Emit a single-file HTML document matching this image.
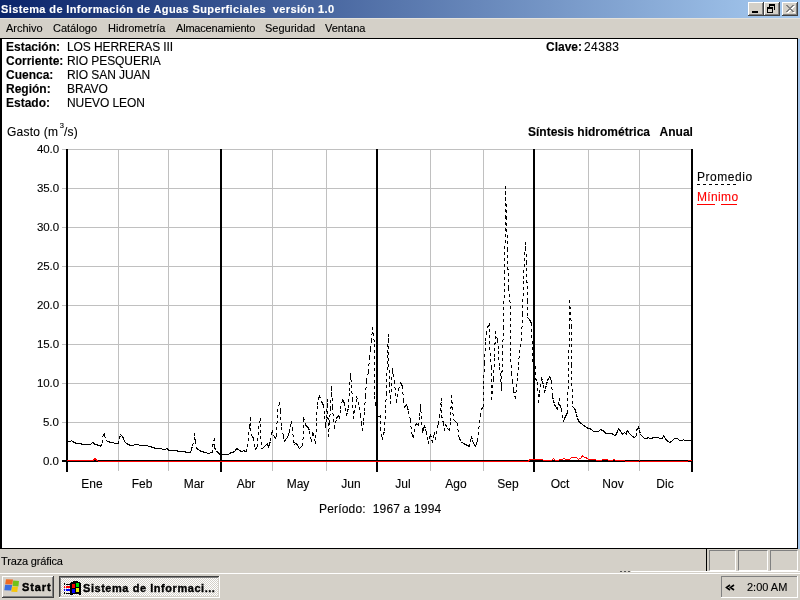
<!DOCTYPE html>
<html><head><meta charset="utf-8">
<style>
*{margin:0;padding:0;box-sizing:border-box}
html,body{width:800px;height:600px;overflow:hidden;background:#D4D0C8;font-family:"Liberation Sans",sans-serif;font-size:11px;color:#000}
.a{position:absolute;white-space:nowrap;line-height:11px;will-change:transform;-webkit-text-stroke:0.12px currentColor}
.b{font-weight:bold}
.c{font-size:12px;line-height:12px}
#title{position:absolute;left:0;top:0;width:800px;height:18px;background:linear-gradient(to right,#0A246A,#A6CAF0)}
.tb{position:absolute;top:2px;width:16px;height:14px;background:#D4D0C8;border-top:1px solid #fff;border-left:1px solid #fff;border-right:1px solid #404040;border-bottom:1px solid #404040;box-shadow:inset -1px -1px 0 #808080}
#menu{position:absolute;left:0;top:18px;width:800px;height:20px;background:#D4D0C8;border-top:1px solid #E4E2DC}
#client{position:absolute;left:0;top:38px;width:798px;height:511px;background:#fff;border:1px solid #000;border-left:2px solid #000}
#rstrip{position:absolute;left:798px;top:39px;width:2px;height:510px;background:#A4C4E8}
#status{position:absolute;left:0;top:549px;width:800px;height:24px;background:#D4D0C8}
.pn{position:absolute;top:550px;height:21px;border-top:1px solid #808080;border-left:1px solid #808080;border-right:1px solid #fff;border-bottom:1px solid #fff}
#task{position:absolute;left:0;top:573px;width:800px;height:27px;background:#D4D0C8;border-top:1px solid #fff}
</style></head><body>
<div id="title"></div>
<div class="a b" style="left:1px;top:4px;color:#fff;letter-spacing:0.38px">Sistema de Información de Aguas Superficiales&nbsp; versión 1.0</div>
<svg style="position:absolute;left:0;top:0" width="800" height="18" shape-rendering="crispEdges">
<g id="btns"></g>
<rect x="748" y="2" width="16" height="14" fill="#404040"/><rect x="748" y="2" width="15" height="13" fill="#FFFFFF"/><rect x="749" y="3" width="14" height="12" fill="#808080"/><rect x="749" y="3" width="13" height="11" fill="#D4D0C8"/><rect x="764" y="2" width="16" height="14" fill="#404040"/><rect x="764" y="2" width="15" height="13" fill="#FFFFFF"/><rect x="765" y="3" width="14" height="12" fill="#808080"/><rect x="765" y="3" width="13" height="11" fill="#D4D0C8"/><rect x="782" y="2" width="16" height="14" fill="#404040"/><rect x="782" y="2" width="15" height="13" fill="#FFFFFF"/><rect x="783" y="3" width="14" height="12" fill="#808080"/><rect x="783" y="3" width="13" height="11" fill="#D4D0C8"/><rect x="752" y="11" width="6" height="2" fill="#000"/><path d="M769 4h6v6h-1v-4h-5z M767 7h6v6h-6z" fill="#000"/><rect x="768" y="9" width="4" height="3" fill="#D4D0C8"/><rect x="769" y="6" width="1" height="1" fill="#000"/><rect x="771" y="6" width="0" height="0"/><rect x="787" y="6" width="2" height="1" fill="#FFFFFF"/><rect x="793" y="6" width="2" height="1" fill="#FFFFFF"/><rect x="788" y="7" width="2" height="1" fill="#FFFFFF"/><rect x="792" y="7" width="2" height="1" fill="#FFFFFF"/><rect x="789" y="8" width="2" height="1" fill="#FFFFFF"/><rect x="791" y="8" width="2" height="1" fill="#FFFFFF"/><rect x="790" y="9" width="2" height="1" fill="#FFFFFF"/><rect x="790" y="9" width="2" height="1" fill="#FFFFFF"/><rect x="791" y="10" width="2" height="1" fill="#FFFFFF"/><rect x="789" y="10" width="2" height="1" fill="#FFFFFF"/><rect x="792" y="11" width="2" height="1" fill="#FFFFFF"/><rect x="788" y="11" width="2" height="1" fill="#FFFFFF"/><rect x="793" y="12" width="2" height="1" fill="#FFFFFF"/><rect x="787" y="12" width="2" height="1" fill="#FFFFFF"/><rect x="786" y="5" width="2" height="1" fill="#808080"/><rect x="792" y="5" width="2" height="1" fill="#808080"/><rect x="787" y="6" width="2" height="1" fill="#808080"/><rect x="791" y="6" width="2" height="1" fill="#808080"/><rect x="788" y="7" width="2" height="1" fill="#808080"/><rect x="790" y="7" width="2" height="1" fill="#808080"/><rect x="789" y="8" width="2" height="1" fill="#808080"/><rect x="789" y="8" width="2" height="1" fill="#808080"/><rect x="790" y="9" width="2" height="1" fill="#808080"/><rect x="788" y="9" width="2" height="1" fill="#808080"/><rect x="791" y="10" width="2" height="1" fill="#808080"/><rect x="787" y="10" width="2" height="1" fill="#808080"/><rect x="792" y="11" width="2" height="1" fill="#808080"/><rect x="786" y="11" width="2" height="1" fill="#808080"/>
</svg>
<div id="menu"></div>
<div class="a" style="left:6px;top:23px">Archivo</div>
<div class="a" style="left:53px;top:23px">Catálogo</div>
<div class="a" style="left:108px;top:23px">Hidrometría</div>
<div class="a" style="left:176px;top:23px;letter-spacing:-0.2px">Almacenamiento</div>
<div class="a" style="left:265px;top:23px">Seguridad</div>
<div class="a" style="left:325px;top:23px">Ventana</div>
<div id="client"></div>
<div id="rstrip"></div>

<div class="a c b" style="left:6px;top:41px">Estación:</div>
<div class="a c b" style="left:6px;top:55px">Corriente:</div>
<div class="a c b" style="left:6px;top:69px">Cuenca:</div>
<div class="a c b" style="left:6px;top:83px">Región:</div>
<div class="a c b" style="left:6px;top:97px">Estado:</div>
<div class="a c" style="left:67px;top:41px;letter-spacing:-0.08px">LOS HERRERAS III</div>
<div class="a c" style="left:67px;top:55px;letter-spacing:-0.08px">RIO PESQUERIA</div>
<div class="a c" style="left:67px;top:69px;letter-spacing:-0.08px">RIO SAN JUAN</div>
<div class="a c" style="left:67px;top:83px;letter-spacing:-0.08px">BRAVO</div>
<div class="a c" style="left:67px;top:97px;letter-spacing:-0.08px">NUEVO LEON</div>
<div class="a c b" style="left:546px;top:41px">Clave:</div>
<div class="a c" style="left:584px;top:41px;letter-spacing:0.4px">24383</div>

<div class="a c" style="left:7px;top:126px;letter-spacing:0.25px">Gasto (m<span style="font-size:7.5px;position:relative;top:-8px;margin:0 0 0 1.5px;line-height:0;letter-spacing:0">3</span>/s)</div>
<div class="a c b" style="left:528px;top:126px">Síntesis hidrométrica&nbsp;&nbsp; Anual</div>

<svg style="position:absolute;left:0;top:0" width="800" height="600" shape-rendering="crispEdges">
<path d="M62 149.5H691 M62 188.5H691 M62 227.5H691 M62 266.5H691 M62 305.5H691 M62 344.5H691 M62 383.5H691 M62 422.5H691 M118.5 149V471 M168.5 149V471 M272.5 149V471 M326.5 149V471 M430.5 149V471 M483.5 149V471 M588.5 149V471 M639.5 149V471" stroke="#C0C0C0" stroke-width="1" fill="none"/>
<path d="M67 149V472 M221 149V472 M377 149V472 M534 149V472 M692 149V472" stroke="#000" stroke-width="2" fill="none"/>
<path d="M62 461H693" stroke="#000" stroke-width="2"/>
<path d="M67.5 442.5L68.5 441.5M68.5 441.5L70.5 441.5M70.5 441.5L71.5 440.5M71.5 440.5L72.5 441.5M72.5 441.5L74.5 442.5M74.5 442.5L76.5 443.5M76.5 443.5L77.5 443.5M77.5 443.5L79.5 443.5M79.5 443.5L80.5 443.5M80.5 443.5L82.5 444.5M82.5 444.5L84.5 444.5M84.5 444.5L85.5 444.5M85.5 444.5L87.5 444.5M87.5 444.5L88.5 444.5M88.5 444.5L90.5 444.5M90.5 444.5L91.5 443.5M91.5 443.5L92.5 442.5M92.5 442.5L94.5 443.5M94.5 443.5L94.5 444.5M94.5 444.5L96.5 444.5M96.5 444.5L98.5 445.5M98.5 445.5L99.5 445.5M99.5 445.5L100.5 446.5M100.5 446.5L102.5 442.5M102.5 442.5L102.5 436.5M102.5 436.5L104.5 433.5M104.5 433.5L104.5 435.5M104.5 435.5L106.5 440.5M106.5 440.5L107.5 441.5M107.5 441.5L108.5 441.5M108.5 441.5L110.5 442.5M110.5 442.5L112.5 442.5M112.5 442.5L113.5 442.5M113.5 442.5L114.5 443.5M114.5 443.5L116.5 443.5M116.5 443.5L118.5 443.5M118.5 443.5L119.5 438.5M119.5 438.5L120.5 434.5M120.5 434.5L122.5 436.5M122.5 436.5L123.5 438.5M123.5 438.5L124.5 441.5M124.5 441.5L126.5 443.5M126.5 443.5L128.5 444.5M128.5 444.5L130.5 445.5M130.5 445.5L131.5 445.5M131.5 445.5L133.5 445.5M133.5 445.5L134.5 444.5M134.5 444.5L136.5 444.5M136.5 444.5L138.5 444.5M138.5 444.5L139.5 445.5M139.5 445.5L140.5 445.5M140.5 445.5L142.5 445.5M142.5 445.5L144.5 445.5M144.5 445.5L145.5 445.5M145.5 445.5L147.5 445.5M147.5 445.5L148.5 446.5M148.5 446.5L150.5 446.5M150.5 446.5L152.5 447.5M152.5 447.5L153.5 447.5M153.5 447.5L155.5 448.5M155.5 448.5L156.5 448.5M156.5 448.5L158.5 448.5M158.5 448.5L160.5 448.5M160.5 448.5L161.5 448.5M161.5 448.5L162.5 449.5M162.5 449.5L164.5 449.5M164.5 449.5L165.5 449.5M165.5 449.5L166.5 448.5M166.5 448.5L168.5 449.5M168.5 449.5L168.5 450.5M168.5 450.5L170.5 450.5M170.5 450.5L172.5 450.5M172.5 450.5L173.5 450.5M173.5 450.5L175.5 450.5M175.5 450.5L176.5 450.5M176.5 450.5L178.5 451.5M178.5 451.5L180.5 451.5M180.5 451.5L181.5 451.5M181.5 451.5L183.5 451.5M183.5 451.5L184.5 451.5M184.5 451.5L186.5 452.5M186.5 452.5L187.5 452.5M187.5 452.5L188.5 452.5M188.5 452.5L190.5 452.5M190.5 452.5L191.5 449.5M191.5 449.5L192.5 445.5M192.5 445.5L194.5 439.5M194.5 439.5L194.5 433.5M194.5 433.5L195.5 441.5M195.5 441.5L196.5 448.5M196.5 448.5L198.5 449.5M198.5 449.5L199.5 450.5M199.5 450.5L201.5 451.5M201.5 451.5L202.5 451.5M202.5 451.5L204.5 452.5M204.5 452.5L206.5 452.5M206.5 452.5L207.5 453.5M207.5 453.5L209.5 453.5M209.5 453.5L210.5 452.5M210.5 452.5L212.5 452.5M212.5 452.5L212.5 446.5M212.5 446.5L214.5 438.5M214.5 438.5L214.5 447.5M214.5 447.5L216.5 451.5M216.5 451.5L218.5 452.5M218.5 452.5L219.5 454.5M219.5 454.5L221.5 454.5M221.5 454.5L222.5 454.5M222.5 454.5L224.5 454.5M224.5 454.5L225.5 454.5M225.5 454.5L227.5 454.5M227.5 454.5L228.5 454.5M228.5 454.5L229.5 453.5M229.5 453.5L231.5 452.5M231.5 452.5L232.5 452.5M232.5 452.5L234.5 451.5M234.5 451.5L235.5 450.5M235.5 450.5L236.5 448.5M236.5 448.5L238.5 449.5M238.5 449.5L239.5 450.5M239.5 450.5L241.5 451.5M241.5 451.5L242.5 451.5M242.5 451.5L243.5 450.5M243.5 450.5L245.5 451.5M245.5 451.5L246.5 451.5M246.5 451.5L247.5 446.5M247.5 446.5L249.5 426.5M249.5 426.5L250.5 417.5M250.5 417.5L250.5 428.5M250.5 428.5L251.5 435.5M251.5 435.5L252.5 436.5M252.5 436.5L253.5 438.5M253.5 438.5L255.5 449.5M255.5 449.5L256.5 447.5M256.5 447.5L257.5 446.5M257.5 446.5L258.5 428.5M258.5 428.5L260.5 418.5M260.5 418.5L260.5 430.5M260.5 430.5L261.5 448.5M261.5 448.5L262.5 448.5M262.5 448.5L263.5 447.5M263.5 447.5L265.5 445.5M265.5 445.5L267.5 443.5M267.5 443.5L268.5 447.5M268.5 447.5L269.5 444.5M269.5 444.5L270.5 440.5M270.5 440.5L271.5 433.5M271.5 433.5L272.5 430.5M272.5 430.5L273.5 435.5M273.5 435.5L275.5 438.5M275.5 438.5L276.5 435.5M276.5 435.5L277.5 411.5M277.5 411.5L279.5 402.5M279.5 402.5L280.5 411.5M280.5 411.5L281.5 427.5M281.5 427.5L283.5 436.5M283.5 436.5L284.5 441.5M284.5 441.5L285.5 439.5M285.5 439.5L287.5 437.5M287.5 437.5L288.5 434.5M288.5 434.5L289.5 431.5M289.5 431.5L290.5 426.5M290.5 426.5L291.5 421.5M291.5 421.5L292.5 428.5M292.5 428.5L293.5 440.5M293.5 440.5L294.5 444.5M294.5 444.5L295.5 443.5M295.5 443.5L296.5 443.5M296.5 443.5L297.5 445.5M297.5 445.5L299.5 448.5M299.5 448.5L300.5 447.5M300.5 447.5L302.5 445.5M302.5 445.5L303.5 433.5M303.5 433.5L303.5 417.5M303.5 417.5L305.5 424.5M305.5 424.5L306.5 426.5M306.5 426.5L308.5 427.5M308.5 427.5L309.5 431.5M309.5 431.5L311.5 441.5M311.5 441.5L312.5 432.5M312.5 432.5L313.5 433.5M313.5 433.5L315.5 443.5M315.5 443.5L316.5 420.5M316.5 420.5L317.5 404.5M317.5 404.5L318.5 399.5M318.5 399.5L319.5 395.5M319.5 395.5L321.5 401.5M321.5 401.5L322.5 403.5M322.5 403.5L323.5 405.5M323.5 405.5L324.5 416.5M324.5 416.5L325.5 427.5M325.5 427.5L326.5 417.5M326.5 417.5L327.5 399.5M327.5 399.5L328.5 436.5M328.5 436.5L329.5 422.5M329.5 422.5L330.5 408.5M330.5 408.5L331.5 386.5M331.5 386.5L332.5 407.5M332.5 407.5L333.5 419.5M333.5 419.5L334.5 428.5M334.5 428.5L336.5 418.5M336.5 418.5L337.5 416.5M337.5 416.5L338.5 415.5M338.5 415.5L339.5 418.5M339.5 418.5L340.5 408.5M340.5 408.5L342.5 399.5M342.5 399.5L343.5 401.5M343.5 401.5L344.5 403.5M344.5 403.5L345.5 408.5M345.5 408.5L346.5 415.5M346.5 415.5L347.5 411.5M347.5 411.5L348.5 407.5M348.5 407.5L349.5 390.5M349.5 390.5L350.5 373.5M350.5 373.5L352.5 399.5M352.5 399.5L353.5 418.5M353.5 418.5L354.5 412.5M354.5 412.5L355.5 407.5M355.5 407.5L356.5 396.5M356.5 396.5L358.5 402.5M358.5 402.5L359.5 407.5M359.5 407.5L360.5 415.5M360.5 415.5L361.5 423.5M361.5 423.5L362.5 430.5M362.5 430.5L363.5 420.5M363.5 420.5L364.5 410.5M364.5 410.5L365.5 395.5M365.5 395.5L366.5 380.5M366.5 380.5L368.5 371.5M368.5 371.5L369.5 357.5M369.5 357.5L370.5 348.5M370.5 348.5L371.5 340.5M371.5 340.5L372.5 327.5M372.5 327.5L374.5 344.5M374.5 344.5L374.5 396.5M374.5 396.5L375.5 403.5M375.5 403.5L376.5 410.5M376.5 410.5L378.5 416.5M378.5 416.5L379.5 416.5M379.5 416.5L380.5 415.5M380.5 415.5L380.5 428.5M380.5 428.5L381.5 434.5M381.5 434.5L382.5 439.5M382.5 439.5L383.5 434.5M383.5 434.5L384.5 430.5M384.5 430.5L385.5 407.5M385.5 407.5L386.5 393.5M386.5 393.5L387.5 352.5M387.5 352.5L388.5 334.5M388.5 334.5L388.5 352.5M388.5 352.5L389.5 384.5M389.5 384.5L390.5 403.5M390.5 403.5L391.5 385.5M391.5 385.5L392.5 368.5M392.5 368.5L394.5 381.5M394.5 381.5L395.5 393.5M395.5 393.5L396.5 402.5M396.5 402.5L397.5 396.5M397.5 396.5L398.5 389.5M398.5 389.5L400.5 382.5M400.5 382.5L401.5 384.5M401.5 384.5L402.5 386.5M402.5 386.5L403.5 400.5M403.5 400.5L404.5 407.5M404.5 407.5L405.5 405.5M405.5 405.5L406.5 404.5M406.5 404.5L407.5 407.5M407.5 407.5L408.5 411.5M408.5 411.5L410.5 420.5M410.5 420.5L411.5 432.5M411.5 432.5L412.5 435.5M412.5 435.5L413.5 437.5M413.5 437.5L414.5 431.5M414.5 431.5L415.5 425.5M415.5 425.5L416.5 423.5M416.5 423.5L418.5 425.5M418.5 425.5L419.5 415.5M419.5 415.5L420.5 404.5M420.5 404.5L422.5 432.5M422.5 432.5L423.5 429.5M423.5 429.5L424.5 425.5M424.5 425.5L425.5 429.5M425.5 429.5L426.5 432.5M426.5 432.5L427.5 437.5M427.5 437.5L428.5 443.5M428.5 443.5L429.5 438.5M429.5 438.5L430.5 434.5M430.5 434.5L432.5 442.5M432.5 442.5L433.5 437.5M433.5 437.5L434.5 432.5M434.5 432.5L435.5 439.5M435.5 439.5L437.5 426.5M437.5 426.5L438.5 423.5M438.5 423.5L439.5 416.5M439.5 416.5L441.5 398.5M441.5 398.5L441.5 415.5M441.5 415.5L443.5 423.5M443.5 423.5L444.5 430.5M444.5 430.5L445.5 424.5M445.5 424.5L447.5 428.5M447.5 428.5L448.5 429.5M448.5 429.5L449.5 430.5M449.5 430.5L450.5 420.5M450.5 420.5L451.5 395.5M451.5 395.5L453.5 419.5M453.5 419.5L454.5 420.5M454.5 420.5L455.5 421.5M455.5 421.5L456.5 422.5M456.5 422.5L457.5 423.5M457.5 423.5L458.5 435.5M458.5 435.5L459.5 438.5M459.5 438.5L461.5 442.5M461.5 442.5L462.5 442.5M462.5 442.5L463.5 443.5M463.5 443.5L465.5 444.5M465.5 444.5L467.5 445.5M467.5 445.5L469.5 446.5M469.5 446.5L470.5 441.5M470.5 441.5L471.5 436.5M471.5 436.5L472.5 440.5M472.5 440.5L473.5 443.5M473.5 443.5L474.5 444.5M474.5 444.5L475.5 446.5M475.5 446.5L476.5 443.5M476.5 443.5L477.5 440.5M477.5 440.5L479.5 422.5M479.5 422.5L480.5 415.5M480.5 415.5L481.5 409.5M481.5 409.5L482.5 407.5M482.5 407.5L483.5 406.5M483.5 406.5L483.5 383.5M483.5 383.5L484.5 362.5M484.5 362.5L485.5 340.5M485.5 340.5L486.5 333.5M486.5 333.5L487.5 327.5M487.5 327.5L489.5 323.5M489.5 323.5L489.5 347.5M489.5 347.5L491.5 367.5M491.5 367.5L491.5 399.5M491.5 399.5L493.5 378.5M493.5 378.5L494.5 356.5M494.5 356.5L495.5 331.5M495.5 331.5L497.5 340.5M497.5 340.5L498.5 351.5M498.5 351.5L499.5 367.5M499.5 367.5L501.5 390.5M501.5 390.5L502.5 353.5M502.5 353.5L503.5 327.5M503.5 327.5L504.5 272.5M504.5 272.5L505.5 217.5M505.5 217.5L505.5 186.5M505.5 186.5L506.5 217.5M506.5 217.5L507.5 249.5M507.5 249.5L508.5 288.5M508.5 288.5L510.5 306.5M510.5 306.5L510.5 353.5M510.5 353.5L511.5 373.5M511.5 373.5L512.5 381.5M512.5 381.5L513.5 390.5M513.5 390.5L515.5 398.5M515.5 398.5L516.5 386.5M516.5 386.5L517.5 375.5M517.5 375.5L518.5 364.5M518.5 364.5L519.5 352.5M519.5 352.5L521.5 340.5M521.5 340.5L522.5 313.5M522.5 313.5L523.5 278.5M523.5 278.5L525.5 242.5M525.5 242.5L526.5 262.5M526.5 262.5L527.5 301.5M527.5 301.5L527.5 317.5M527.5 317.5L529.5 319.5M529.5 319.5L530.5 321.5M530.5 321.5L531.5 323.5M531.5 323.5L532.5 353.5M532.5 353.5L533.5 375.5M533.5 375.5L535.5 366.5M535.5 366.5L535.5 378.5M535.5 378.5L537.5 382.5M537.5 382.5L538.5 402.5M538.5 402.5L539.5 392.5M539.5 392.5L541.5 377.5M541.5 377.5L542.5 381.5M542.5 381.5L543.5 385.5M543.5 385.5L544.5 392.5M544.5 392.5L545.5 388.5M545.5 388.5L546.5 384.5M546.5 384.5L547.5 380.5M547.5 380.5L549.5 376.5M549.5 376.5L550.5 378.5M550.5 378.5L551.5 381.5M551.5 381.5L552.5 396.5M552.5 396.5L553.5 400.5M553.5 400.5L554.5 404.5M554.5 404.5L555.5 406.5M555.5 406.5L557.5 409.5M557.5 409.5L558.5 404.5M558.5 404.5L559.5 398.5M559.5 398.5L559.5 404.5M559.5 404.5L560.5 406.5M560.5 406.5L561.5 409.5M561.5 409.5L562.5 415.5M562.5 415.5L563.5 421.5M563.5 421.5L564.5 418.5M564.5 418.5L565.5 416.5M565.5 416.5L566.5 414.5M566.5 414.5L567.5 412.5M567.5 412.5L569.5 326.5M569.5 326.5L569.5 300.5M569.5 300.5L571.5 326.5M571.5 326.5L571.5 365.5M571.5 365.5L572.5 406.5M572.5 406.5L574.5 408.5M574.5 408.5L575.5 410.5M575.5 410.5L576.5 414.5M576.5 414.5L577.5 418.5M577.5 418.5L578.5 420.5M578.5 420.5L579.5 422.5M579.5 422.5L581.5 423.5M581.5 423.5L582.5 424.5M582.5 424.5L583.5 425.5M583.5 425.5L585.5 426.5M585.5 426.5L586.5 427.5M586.5 427.5L588.5 428.5M588.5 428.5L589.5 428.5M589.5 428.5L591.5 429.5M591.5 429.5L592.5 430.5M592.5 430.5L593.5 431.5M593.5 431.5L595.5 431.5M595.5 431.5L596.5 431.5M596.5 431.5L597.5 431.5M597.5 431.5L598.5 431.5M598.5 431.5L599.5 430.5M599.5 430.5L600.5 429.5M600.5 429.5L602.5 430.5M602.5 430.5L603.5 430.5M603.5 430.5L604.5 432.5M604.5 432.5L606.5 433.5M606.5 433.5L607.5 433.5M607.5 433.5L608.5 433.5M608.5 433.5L610.5 433.5M610.5 433.5L611.5 433.5M611.5 433.5L613.5 434.5M613.5 434.5L614.5 435.5M614.5 435.5L615.5 435.5M615.5 435.5L616.5 433.5M616.5 433.5L617.5 431.5M617.5 431.5L618.5 428.5M618.5 428.5L619.5 429.5M619.5 429.5L620.5 431.5M620.5 431.5L621.5 432.5M621.5 432.5L622.5 434.5M622.5 434.5L623.5 433.5M623.5 433.5L624.5 432.5M624.5 432.5L626.5 434.5M626.5 434.5L626.5 432.5M626.5 432.5L627.5 430.5M627.5 430.5L629.5 433.5M629.5 433.5L631.5 435.5M631.5 435.5L632.5 436.5M632.5 436.5L634.5 437.5M634.5 437.5L636.5 435.5M636.5 435.5L636.5 430.5M636.5 430.5L638.5 426.5M638.5 426.5L639.5 430.5M639.5 430.5L640.5 434.5M640.5 434.5L642.5 436.5M642.5 436.5L643.5 437.5M643.5 437.5L644.5 438.5M644.5 438.5L646.5 438.5M646.5 438.5L648.5 437.5M648.5 437.5L649.5 438.5M649.5 438.5L650.5 438.5M650.5 438.5L651.5 438.5M651.5 438.5L653.5 437.5M653.5 437.5L655.5 437.5M655.5 437.5L656.5 437.5M656.5 437.5L658.5 437.5M658.5 437.5L659.5 438.5M659.5 438.5L660.5 438.5M660.5 438.5L662.5 438.5M662.5 438.5L663.5 435.5M663.5 435.5L665.5 438.5M665.5 438.5L666.5 440.5M666.5 440.5L668.5 441.5M668.5 441.5L669.5 442.5M669.5 442.5L671.5 441.5M671.5 441.5L672.5 440.5M672.5 440.5L674.5 438.5M674.5 438.5L675.5 438.5M675.5 438.5L677.5 438.5M677.5 438.5L678.5 439.5M678.5 439.5L679.5 440.5M679.5 440.5L680.5 440.5M680.5 440.5L682.5 440.5M682.5 440.5L683.5 439.5M683.5 439.5L684.5 440.5M684.5 440.5L686.5 440.5M686.5 440.5L688.5 440.5M688.5 440.5L689.5 440.5M689.5 440.5L691.5 440.5" stroke="#000" stroke-width="1" fill="none" stroke-linecap="square" stroke-dasharray="2 4"/>
<path d="M66.5 460.5 L93.5 460.5 L94.5 458.5 L95.5 458.5 L96.5 460.5 L97.5 460.5 L98.5 461.5 L528.5 461.5 L529.5 459.5 L542.5 459.5 L543.5 460.5 L551.5 460.5 L552.5 459.5 L553.5 458.5 L554.5 459.5 L555.5 460.5 L558.5 460.5 L559.5 459.5 L562.5 459.5 L563.5 458.5 L564.5 458.5 L565.5 459.5 L569.5 459.5 L570.5 458.5 L571.5 457.5 L576.5 457.5 L577.5 458.5 L578.5 459.5 L579.5 458.5 L580.5 458.5 L581.5 457.5 L582.5 455.5 L583.5 456.5 L584.5 457.5 L585.5 457.5 L587.5 458.5 L588.5 459.5 L595.5 459.5 L596.5 460.5 L601.5 460.5 L602.5 459.5 L607.5 459.5 L608.5 460.5 L612.5 460.5 L613.5 459.5 L614.5 459.5 L615.5 460.5 L624.5 460.5 L625.5 461.5 L638.5 461.5 L639.5 460.5 L640.5 461.5 L687.5 461.5 L688.5 460.5 L691.5 460.5" stroke="#FF0000" stroke-width="1" fill="none"/>
</svg>
<div class="a" style="right:741px;top:144px;font-size:11.5px;letter-spacing:-0.1px">40.0</div>
<div class="a" style="right:741px;top:183px;font-size:11.5px;letter-spacing:-0.1px">35.0</div>
<div class="a" style="right:741px;top:222px;font-size:11.5px;letter-spacing:-0.1px">30.0</div>
<div class="a" style="right:741px;top:261px;font-size:11.5px;letter-spacing:-0.1px">25.0</div>
<div class="a" style="right:741px;top:300px;font-size:11.5px;letter-spacing:-0.1px">20.0</div>
<div class="a" style="right:741px;top:339px;font-size:11.5px;letter-spacing:-0.1px">15.0</div>
<div class="a" style="right:741px;top:378px;font-size:11.5px;letter-spacing:-0.1px">10.0</div>
<div class="a" style="right:741px;top:417px;font-size:11.5px;letter-spacing:-0.1px">5.0</div>
<div class="a" style="right:741px;top:456px;font-size:11.5px;letter-spacing:-0.1px">0.0</div>
<div class="a c" style="left:61.7px;width:60px;text-align:center;top:478px">Ene</div>
<div class="a c" style="left:112.2px;width:60px;text-align:center;top:478px">Feb</div>
<div class="a c" style="left:163.7px;width:60px;text-align:center;top:478px">Mar</div>
<div class="a c" style="left:215.7px;width:60px;text-align:center;top:478px">Abr</div>
<div class="a c" style="left:268.2px;width:60px;text-align:center;top:478px">May</div>
<div class="a c" style="left:320.7px;width:60px;text-align:center;top:478px">Jun</div>
<div class="a c" style="left:372.7px;width:60px;text-align:center;top:478px">Jul</div>
<div class="a c" style="left:425.7px;width:60px;text-align:center;top:478px">Ago</div>
<div class="a c" style="left:477.7px;width:60px;text-align:center;top:478px">Sep</div>
<div class="a c" style="left:530.2px;width:60px;text-align:center;top:478px">Oct</div>
<div class="a c" style="left:582.7px;width:60px;text-align:center;top:478px">Nov</div>
<div class="a c" style="left:634.7px;width:60px;text-align:center;top:478px">Dic</div>
<div class="a c" style="left:319px;top:503px;letter-spacing:0.17px">Período:&nbsp; 1967 a 1994</div>

<div class="a" style="left:697px;top:172px;font-size:12px;letter-spacing:0.55px">Promedio</div>
<div style="position:absolute;left:697px;top:184px;width:40px;height:1px;background:repeating-linear-gradient(to right,#000 0 3px,transparent 3px 6px)"></div>
<div class="a" style="left:697px;top:192px;font-size:12px;color:#f00;letter-spacing:0.35px">Mínimo</div>
<div style="position:absolute;left:697px;top:204px;width:18px;height:1px;background:#f00"></div>
<div style="position:absolute;left:721px;top:204px;width:16px;height:1px;background:#f00"></div>

<div id="status"></div>
<div class="a" style="left:1px;top:556px;letter-spacing:-0.15px">Traza gráfica</div>
<div style="position:absolute;left:706px;top:549px;width:1px;height:22px;background:#000"></div>
<div class="pn" style="left:709px;width:27px"></div>
<div class="pn" style="left:738px;width:30px"></div>
<div class="pn" style="left:770px;width:28px"></div>
<div id="task"></div>
<svg style="position:absolute;left:0;top:573px;overflow:visible" width="800" height="27" shape-rendering="crispEdges">
<defs><pattern id="chk" width="2" height="2" patternUnits="userSpaceOnUse"><rect width="2" height="2" fill="#D4D0C8"/><rect width="1" height="1" fill="#fff"/><rect x="1" y="1" width="1" height="1" fill="#fff"/></pattern></defs><rect x="2" y="3" width="52" height="22" fill="#404040"/><rect x="2" y="3" width="51" height="21" fill="#FFFFFF"/><rect x="3" y="4" width="50" height="20" fill="#808080"/><rect x="3" y="4" width="49" height="19" fill="#D4D0C8"/><rect x="59" y="3" width="161" height="22" fill="#FFFFFF"/><rect x="59" y="3" width="160" height="21" fill="#404040"/><rect x="60" y="4" width="159" height="20" fill="#D4D0C8"/><rect x="60" y="4" width="158" height="19" fill="#808080"/><rect x="61" y="5" width="157" height="18" fill="url(#chk)"/><rect x="721" y="3" width="77" height="22" fill="#fff"/><rect x="721" y="3" width="76" height="21" fill="#808080"/><rect x="722" y="4" width="75" height="20" fill="#D4D0C8"/><g shape-rendering="auto"><path d="M6 6.2L13 6.6L12.4 11.4L5.2 11.3z" fill="#F06A22"/><path d="M13.2 7.4L19 7.9L18.4 13.4L12.5 12.9z" fill="#72C21A"/><path d="M5.1 11.8L12.1 11.9L11.4 17.6L4.3 17.3z" fill="#3B6EE0"/><path d="M12.2 13.4L17.9 13.8L17.3 19.1L11.3 18.8z" fill="#F7C60A"/></g><g><rect x="64" y="10" width="1" height="2" fill="#000"/><rect x="64" y="13" width="1" height="2" fill="#f00"/><rect x="64" y="16" width="1" height="2" fill="#00f"/><rect x="64" y="19" width="1" height="2" fill="#000"/><rect x="66" y="11" width="4" height="1" fill="#000"/><rect x="66" y="13" width="4" height="2" fill="#f00"/><rect x="66" y="16" width="4" height="2" fill="#00f"/><rect x="66" y="20" width="4" height="1" fill="#000"/><path d="M70 10L73 8.5L77 8L81 10V22L77 21L73 21.5L70 22z" fill="#000"/><rect x="72" y="11" width="3" height="4" fill="#f00"/><rect x="76" y="10" width="3" height="4" fill="#0d0"/><rect x="72" y="16" width="3" height="4" fill="#00f"/><rect x="76" y="15" width="3" height="4" fill="#ee0"/></g><path d="M730 12L726.5 14.5L730 17M734 12L730.5 14.5L734 17" stroke="#000" stroke-width="1.6" fill="none" shape-rendering="auto"/><rect x="631" y="-2" width="169" height="1" fill="#fff"/><rect x="620" y="-2" width="2" height="1" fill="#555"/><rect x="624" y="-2" width="2" height="1" fill="#555"/><rect x="628" y="-2" width="2" height="1" fill="#555"/>
</svg>
<div class="a b" style="left:22px;top:582px;letter-spacing:0.9px;-webkit-text-stroke:0.45px #000">Start</div>
<div class="a b" style="left:83px;top:583px;letter-spacing:0.55px;-webkit-text-stroke:0.35px #000">Sistema de Informaci...</div>
<div class="a" style="left:747px;top:582px">2:00 AM</div>
</body></html>
